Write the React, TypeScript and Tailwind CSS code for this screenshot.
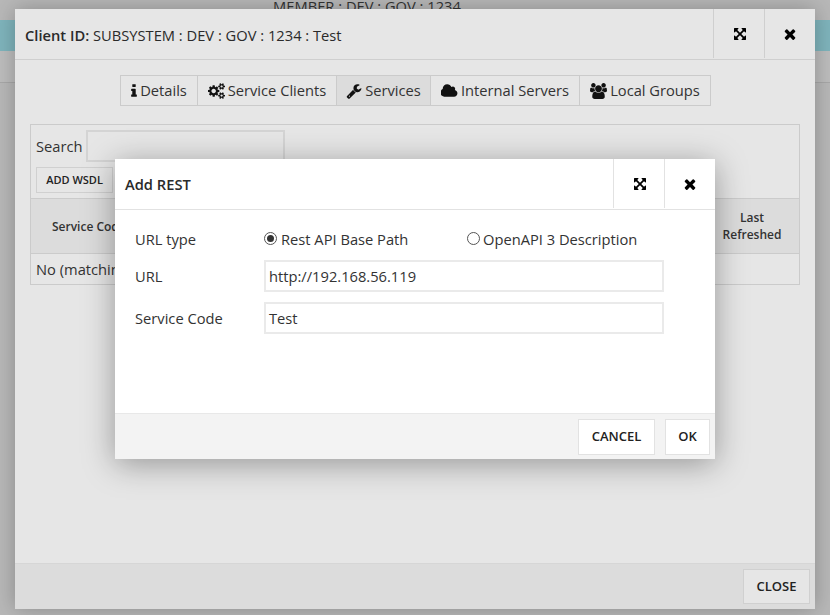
import React from 'react';

// FontAwesome 4 glyphs, the react-icons set only ships the newer outlines
const ICONS: Record<string, { box: string; d: string }> = {
  info: {
    box: '0 0 1792 1792',
    d: 'M1216 1344v128q0 26-19 45t-45 19h-512q-26 0-45-19t-19-45v-128q0-26 19-45t45-19h64v-384h-64q-26 0-45-19t-19-45v-128q0-26 19-45t45-19h384q26 0 45 19t19 45v576h64q26 0 45 19t19 45zm-128-1152v192q0 26-19 45t-45 19h-256q-26 0-45-19t-19-45v-192q0-26 19-45t45-19h256q26 0 45 19t19 45z',
  },
  cogs: {
    box: '0 0 1920 1792',
    d: 'M896 896q0-106-75-181t-181-75-181 75-75 181 75 181 181 75 181-75 75-181zm768 512q0-52-38-90t-90-38-90 38-38 90q0 53 37.500 90.500t90.500 37.500 90.500-37.500 37.500-90.500zm0-1024q0-52-38-90t-90-38-90 38-38 90q0 53 37.500 90.500t90.500 37.500 90.500-37.500 37.500-90.500zm-384 421v185q0 10-7 19.500t-16 10.500l-155 24q-11 35-32 76 34 48 90 115 7 11 7 20 0 12-7 19-23 30-82.500 89.500t-78.500 59.500q-11 0-21-7l-115-90q-37 19-77 31-11 108-23 155-7 24-30 24h-186q-11 0-20-7.500t-10-17.500l-23-153q-34-10-75-31l-118 89q-7 7-20 7-11 0-21-8-144-133-144-160 0-9 7-19 10-14 41-53t47-61q-23-44-35-82l-152-24q-10-1-17-9.500t-7-19.500v-185q0-10 7-19.500t16-10.500l155-24q11-35 32-76-34-48-90-115-7-11-7-20 0-12 7-20 22-30 82-89t79-59q11 0 21 7l115 90q34-18 77-32 11-108 23-154 7-24 30-24h186q11 0 20 7.500t10 17.500l23 153q34 10 75 31l118-89q8-7 20-7 11 0 21 8 144 133 144 160 0 8-7 19-12 16-42 54t-45 60q23 48 34 82l152 23q10 2 17 10.500t7 19.500zm640 533v140q0 16-149 31-12 27-30 52 51 113 51 138 0 4-4 7-122 71-124 71-8 0-46-47t-52-68q-20 2-30 2t-30-2q-14 21-52 68t-46 47q-2 0-124-71-4-3-4-7 0-25 51-138-18-25-30-52-149-15-149-31v-140q0-16 149-31 13-29 30-52-51-113-51-138 0-4 4-7 4-2 35-20t59-34 30-16q8 0 46 46.500t52 67.500q20-2 30-2t30 2q51-71 92-112l6-2q4 0 124 70 4 3 4 7 0 25-51 138 17 23 30 52 149 15 149 31zm0-1024v140q0 16-149 31-12 27-30 52 51 113 51 138 0 4-4 7-122 71-124 71-8 0-46-47t-52-68q-20 2-30 2t-30-2q-14 21-52 68t-46 47q-2 0-124-71-4-3-4-7 0-25 51-138-18-25-30-52-149-15-149-31v-140q0-16 149-31 13-29 30-52-51-113-51-138 0-4 4-7 4-2 35-20t59-34 30-16q8 0 46 46.500t52 67.500q20-2 30-2t30 2q51-71 92-112l6-2q4 0 124 70 4 3 4 7 0 25-51 138 17 23 30 52 149 15 149 31z',
  },
  wrench: {
    box: '0 0 1792 1792',
    d: 'M448 1472q0-26-19-45t-45-19-45 19-19 45 19 45 45 19 45-19 19-45zm644-420l-682 682q-37 37-90 37-52 0-91-37l-106-108q-38-36-38-90 0-53 38-91l681-681q39 98 114.500 173.500t173.500 114.500zm634-435q0 39-23 106-47 134-164.500 217.500t-258.500 83.500q-185 0-316.500-131.500t-131.500-316.500 131.500-316.500 316.500-131.500q58 0 121.500 16.500t107.500 46.500q16 11 16 28t-16 28l-293 169v224l193 106q5-3 79-48.500t135.500-81 70.500-35.500q15 0 23.500 10t8.500 25z',
  },
  cloud: {
    box: '0 0 1920 1792',
    d: 'M1856 1152q0 159-112.500 271.500t-271.500 112.500h-1088q-185 0-316.500-131.500t-131.500-316.500q0-132 71-241.500t187-163.500q-2-28-2-43 0-212 150-362t362-150q158 0 286.500 88t187.500 230q70-62 166-62 106 0 181 75t75 181q0 75-41 138 129 30 213 134.500t84 239.500z',
  },
  users: {
    box: '0 0 1920 1792',
    d: 'M593 896q-162 5-265 128h-134q-82 0-138-40.500t-56-118.500q0-353 124-353 6 0 43.500 21t97.500 42.500 119 21.500q67 0 133-23-5 37-5 66 0 139 81 256zm1071 637q0 120-73 189.500t-194 69.500h-874q-121 0-194-69.500t-73-189.500q0-53 3.500-103.500t14-109 26.500-108.500 43-97.500 62-81 85.500-53.500 111.500-20q10 0 43 21.500t73 48 107 48 135 21.500 135-21.500 107-48 73-48 43-21.500q61 0 111.500 20t85.500 53.500 62 81 43 97.500 26.500 108.500 14 109 3.500 103.500zm-1024-1277q0 106-75 181t-181 75-181-75-75-181 75-181 181-75 181 75 75 181zm704 384q0 159-112.500 271.500t-271.500 112.500-271.500-112.500-112.500-271.500 112.500-271.500 271.500-112.500 271.500 112.500 112.500 271.500zm576 225q0 78-56 118.500t-138 40.500h-134q-103-123-265-128 81-117 81-256 0-29-5-66 66 23 133 23 59 0 119-21.500t97.500-42.500 43.500-21q124 0 124 353zm-128-609q0 106-75 181t-181 75-181-75-75-181 75-181 181-75 181 75 75 181z',
  },
  expand: {
    box: '0 0 1792 1792',
    d: 'M1411 541l-355 355 355 355 144-144q29-31 70-14 39 17 39 59v448q0 26-19 45t-45 19h-448q-42 0-59-40-17-39 14-69l144-144-355-355-355 355 144 144q31 30 14 69-17 40-59 40h-448q-26 0-45-19t-19-45v-448q0-42 40-59 39-17 69 14l144 144 355-355-355-355-144 144q-19 19-45 19-12 0-24-5-40-17-40-59v-448q0-26 19-45t45-19h448q42 0 59 40 17 39-14 69l-144 144 355 355 355-355-144-144q-31-30-14-69 17-40 59-40h448q26 0 45 19t19 45v448q0 42-39 59-13 5-25 5-26 0-45-19z',
  },
  times: {
    box: '0 0 1792 1792',
    d: 'M1490 1322q0 40-28 68l-136 136q-28 28-68 28t-68-28l-294-294-294 294q-28 28-68 28t-68-28l-136-136q-28-28-28-68t28-68l294-294-294-294q-28-28-28-68t28-68l136-136q28-28 68-28t68 28l294 294 294-294q28-28 68-28t68 28l136 136q28 28 28 68t-28 68l-294 294 294 294q28 28 28 68z',
  },
};

const Glyph: React.FC<{ name: string; className: string }> = ({ name, className }) => (
  <svg viewBox={ICONS[name].box} className={className} fill="currentColor">
    <path d={ICONS[name].d} />
  </svg>
);

const tabs = [
  { label: 'Details', icon: 'info', iconSize: 'w-[16px] h-[16px] -mx-[5px]', width: 'w-[76px]' },
  { label: 'Service Clients', icon: 'cogs', iconSize: 'w-[17px] h-[16px]', width: 'w-[139px]' },
  { label: 'Services', icon: 'wrench', iconSize: 'w-[16px] h-[16px]', width: 'w-[94px]', active: true },
  { label: 'Internal Servers', icon: 'cloud', iconSize: 'w-[17px] h-[16px]', width: 'w-[149px]' },
  { label: 'Local Groups', icon: 'users', iconSize: 'w-[17px] h-[16px]', width: 'w-[131px]' },
];

const DialogButtons: React.FC<{ border: string }> = ({ border }) => (
  <div className="flex self-start">
    <button className={`w-[51px] h-[49px] flex items-center justify-center border-l ${border} text-black`}>
      <Glyph name="expand" className="w-[14px] h-[14px] ml-[1px]" />
    </button>
    <button className={`w-[51px] h-[49px] flex items-center justify-center border-l ${border} text-black`}>
      <Glyph name="times" className="w-[16px] h-[16px]" />
    </button>
  </div>
);

const App: React.FC = () => {
  return (
    <div className="relative w-[830px] h-[615px] overflow-hidden bg-[#b8b8b8] font-['Open_Sans',sans-serif] text-[14.7px] text-[#222]">
      {/* page behind the dialogs */}
      <div className="h-[20px] text-center text-[14.7px] leading-[12px] text-[#333] pr-[96px] overflow-hidden">MEMBER : DEV : GOV : 1234</div>
      <div className="h-[31px] bg-[#7fb4bc]"></div>
      <div className="h-[32px] bg-[#bdbdbd] border-b border-[#a8a8a8]"></div>

      {/* client dialog */}
      <div className="absolute left-[15px] top-[9px] w-[800px] h-[600px] flex flex-col bg-[#e6e6e6] shadow-[0_0_20px_rgba(0,0,0,0.25)]">
        <div className="h-[51px] flex items-center justify-between border-b border-[#cfcfcf] shrink-0">
          <div className="pl-[10px] pt-[2px] text-[#2a2a2a]">
            <span className="font-semibold">Client ID:</span> SUBSYSTEM : DEV : GOV : 1234 : Test
          </div>
          <DialogButtons border="border-[#cfcfcf]" />
        </div>

        <div className="flex-1 px-[15px]">
          <div className="flex justify-center mt-[15px] ml-[1px]">
            <div className="flex border border-[#cbcbcb] h-[31px]">
              {tabs.map((tab, idx) => (
                <div
                  key={tab.label}
                  className={`flex items-center justify-center gap-[3px] text-[#333] ${tab.width} ${idx > 0 ? 'border-l border-[#cbcbcb]' : ''} ${tab.active ? 'bg-[#dcdcdc]' : ''}`}
                >
                  <Glyph name={tab.icon} className={`${tab.iconSize} text-[#111]`} />
                  {tab.label}
                </div>
              ))}
            </div>
          </div>

          <div className="mt-[18px] h-[161px] border border-[#cbcbcb] flex flex-col">
            <div className="h-[73px] px-[5px] pt-[5px]">
              <div className="flex items-center gap-[3px] h-[32px]">
                <span className="text-[#333]">Search</span>
                <div className="w-[199px] h-[32px] border-2 border-[#d4d4d4]"></div>
              </div>
              <button className="mt-[5px] w-[77px] h-[26px] border border-[#d0d0d0] bg-[#e6e6e6] text-[11px] font-semibold text-[#222]">ADD WSDL</button>
            </div>
            <div className="h-[56px] bg-[#dcdcdc] border-y border-[#cbcbcb] flex items-center justify-between text-[12px] font-semibold text-[#333]">
              <span className="pl-[21px] pt-[1px]">Service Code</span>
              <span className="w-[94px] text-center leading-[17px]">Last<br />Refreshed</span>
            </div>
            <div className="flex-1 flex items-center px-[5px] text-[#333]">No (matching) records</div>
          </div>
        </div>

        <div className="h-[46px] bg-[#dcdcdc] border-t border-[#d6d6d6] flex items-center justify-end pr-[5px] shrink-0">
          <button className="w-[67px] h-[35px] bg-[#e6e6e6] border border-[#d0d0d0] text-[13px] font-semibold text-[#222]">CLOSE</button>
        </div>
      </div>

      {/* add rest dialog */}
      <div className="absolute left-[115px] top-[159px] w-[600px] h-[300px] flex flex-col bg-white shadow-[0_5px_30px_rgba(0,0,0,0.35)]">
        <div className="h-[51px] flex items-center justify-between border-b border-[#e2e2e2] shrink-0">
          <div className="pl-[10px] text-[14.7px] font-semibold text-[#2a2a2a]">Add REST</div>
          <DialogButtons border="border-[#e2e2e2]" />
        </div>

        <div className="flex-1 pl-[20px] pt-[15px] text-[#333]">
          <div className="flex items-center h-[32px] mt-[-2px]">
            <label className="w-[129px]">URL type</label>
            <div className="w-[203px] flex items-center gap-[4px]">
              <span className="w-[13px] h-[13px] rounded-full border border-[#555] flex items-center justify-center">
                <span className="w-[7px] h-[7px] rounded-full bg-[#333]"></span>
              </span>
              Rest API Base Path
            </div>
            <div className="flex items-center gap-[3px]">
              <span className="w-[13px] h-[13px] rounded-full border border-[#555]"></span>
              OpenAPI 3 Description
            </div>
          </div>
          <div className="flex items-center h-[32px] mt-[5px]">
            <label className="w-[129px]">URL</label>
            <div className="w-[400px] h-[32px] px-[3px] flex items-center border-2 border-[#eaeaea]">http://192.168.56.119</div>
          </div>
          <div className="flex items-center h-[32px] mt-[10px]">
            <label className="w-[129px]">Service Code</label>
            <div className="w-[400px] h-[32px] px-[3px] flex items-center border-2 border-[#eaeaea]">Test</div>
          </div>
        </div>

        <div className="h-[46px] bg-[#f3f3f3] border-t border-[#e8e8e8] flex items-center justify-end gap-[10px] pr-[5px] shrink-0">
          <button className="w-[77px] h-[36px] bg-white border border-[#e2e2e2] text-[13px] font-semibold text-[#222]">CANCEL</button>
          <button className="w-[45px] h-[36px] bg-white border border-[#e2e2e2] text-[13px] font-semibold text-[#222]">OK</button>
        </div>
      </div>
    </div>
  );
};

export default App;
